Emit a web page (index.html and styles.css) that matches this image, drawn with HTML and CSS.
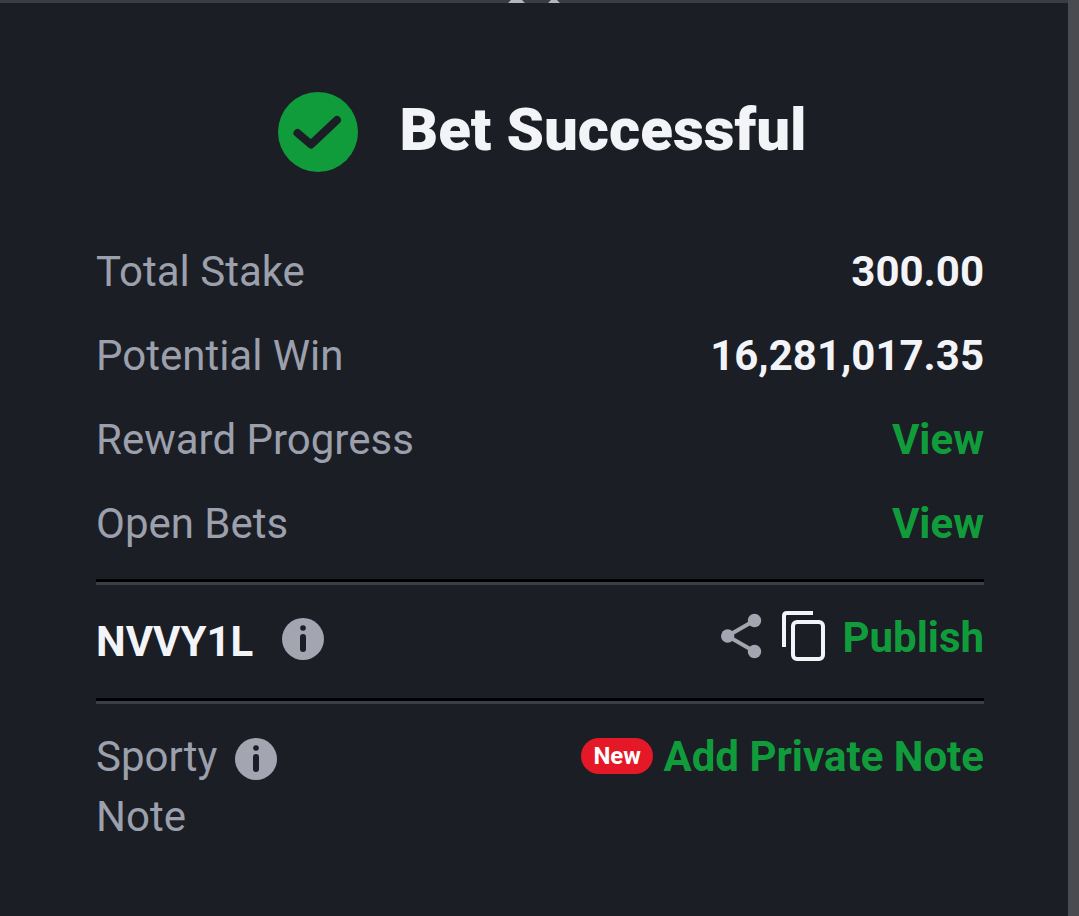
FILE: index.html
```html
<!DOCTYPE html>
<html lang="en">
<head>
    <meta charset="UTF-8">
    <title>Bet Successful</title>
    <link rel="stylesheet" href="styles.css">
</head>
<body>
    <div class="page">
        <div class="panel">
            <svg class="handle" width="52" height="3" viewBox="0 0 52 3">
                <path d="M0 3 L3 0 H14 L17 3 Z M40 3 L43 0 H49 L52 3 Z" fill="#b4b6bd"/>
            </svg>

            <div class="heading">
                <svg class="check" width="80" height="80" viewBox="0 0 80 80">
                    <circle cx="40" cy="40" r="40" fill="#119c3c"/>
                    <path d="M19.500 41 L33 52.500 L59 28" fill="none" stroke="#1b1e25" stroke-width="8" stroke-linecap="round" stroke-linejoin="round"/>
                </svg>
                <h1>Bet Successful</h1>
            </div>

            <div class="row">
                <span class="label">Total Stake</span>
                <span class="value">300.00</span>
            </div>
            <div class="row">
                <span class="label">Potential Win</span>
                <span class="value">16,281,017.35</span>
            </div>
            <div class="row">
                <span class="label">Reward Progress</span>
                <a class="link">View</a>
            </div>
            <div class="row">
                <span class="label">Open Bets</span>
                <a class="link">View</a>
            </div>

            <div class="divider first"></div>

            <div class="code-row">
                <div class="code">
                    <span class="value">NVVY1L</span>
                    <svg class="info" width="42" height="42" viewBox="0 0 42 42">
                        <circle cx="21" cy="21" r="21" fill="#a3a6b1"/>
                        <circle cx="21" cy="10" r="2.8" fill="#1b1e25"/>
                        <rect x="18" y="16" width="6" height="18" rx="3" fill="#1b1e25"/>
                    </svg>
                </div>
                <div class="actions">
                    <svg class="share" width="41" height="46" viewBox="0 0 41 46">
                        <path d="M33.5 7.5 L6.500 23 L33.5 38.5" fill="none" stroke="#a3a6b1" stroke-width="4"/>
                        <circle cx="33.5" cy="7.5" r="6.700" fill="#a3a6b1"/>
                        <circle cx="6.700" cy="23" r="6.700" fill="#a3a6b1"/>
                        <circle cx="33.5" cy="38.5" r="6.700" fill="#a3a6b1"/>
                    </svg>
                    <svg class="copy" width="43" height="50" viewBox="0 0 43 50">
                        <path d="M31 2 H5 Q2 2 2 5 V36" fill="none" stroke="#f3f4f7" stroke-width="4"/>
                        <rect x="11" y="11" width="30" height="37" rx="4" fill="none" stroke="#f3f4f7" stroke-width="4"/>
                    </svg>
                    <a class="link">Publish</a>
                </div>
            </div>

            <div class="divider"></div>

            <div class="note-row">
                <div class="note-label">
                    Sporty
                    <svg class="info" width="42" height="42" viewBox="0 0 42 42">
                        <circle cx="21" cy="21" r="21" fill="#a3a6b1"/>
                        <circle cx="21" cy="10" r="2.8" fill="#1b1e25"/>
                        <rect x="18" y="16" width="6" height="18" rx="3" fill="#1b1e25"/>
                    </svg>
                    Note
                </div>
                <div class="note-action">
                    <span class="badge">New</span>
                    <a class="link">Add Private Note</a>
                </div>
            </div>
        </div>
        <div class="strip"></div>
    </div>
</body>
</html>
```

FILE: styles.css
```css
body {
    margin: 0;
    font-family: Roboto, "Liberation Sans", sans-serif;
    background: #1b1e25;
}
.page {
    display: flex;
    height: 916px;
    overflow: hidden;
}
.panel {
    position: relative;
    flex: 1;
    box-sizing: border-box;
    padding: 0 84px 0 96px;
    background: #1b1e25;
    border-top: 3px solid #3a3d46;
}
.strip {
    width: 11px;
    background: #4a4b50;
}
.handle {
    position: absolute;
    top: -3px;
    left: 508px;
}
.heading {
    display: flex;
    align-items: center;
    justify-content: center;
    gap: 41px;
    padding: 89px 0 57px;
    margin-right: -5px;
}
.check {
    flex-shrink: 0;
}
h1 {
    margin: 0;
    font-size: 60px;
    line-height: 74px;
    padding-bottom: 4px;
    font-weight: 900;
    color: #f3f4f7;
}
.row {
    display: flex;
    justify-content: space-between;
    align-items: center;
    height: 84px;
}
.label {
    font-size: 42px;
    font-weight: 400;
    color: #9ca0ad;
}
.value {
    font-size: 42px;
    font-weight: 700;
    color: #f3f4f7;
}
.link {
    font-size: 42px;
    font-weight: 700;
    color: #119c3c;
}
.divider {
    height: 3px;
    background: #000;
    border-bottom: 3px solid #3b3e47;
}
.first {
    margin-top: 14px;
}
.code-row {
    display: flex;
    justify-content: space-between;
    align-items: center;
    height: 113px;
}
.code {
    display: flex;
    align-items: center;
    gap: 29px;
}
.code .info {
    margin-bottom: 5px;
}
.actions {
    display: flex;
    align-items: center;
    padding-bottom: 8px;
}
.share {
    margin: 0 20px 4px 0;
}
.copy {
    margin: 0 17px 4px 0;
}
.note-row {
    display: flex;
    justify-content: space-between;
    padding-top: 22px;
}
.note-label {
    width: 190px;
    padding-top: 1px;
    line-height: 60px;
    font-size: 42px;
    color: #9ca0ad;
}
.note-label .info {
    margin: -12px 0 -10px 7px;
    vertical-align: middle;
}
.note-action {
    display: flex;
    align-items: center;
    gap: 10px;
    height: 60px;
}
.badge {
    padding: 0 12.5px;
    height: 36px;
    line-height: 36px;
    border-radius: 18px;
    background: #e41827;
    color: #fff;
    font-size: 24px;
    font-weight: 700;
}
```
